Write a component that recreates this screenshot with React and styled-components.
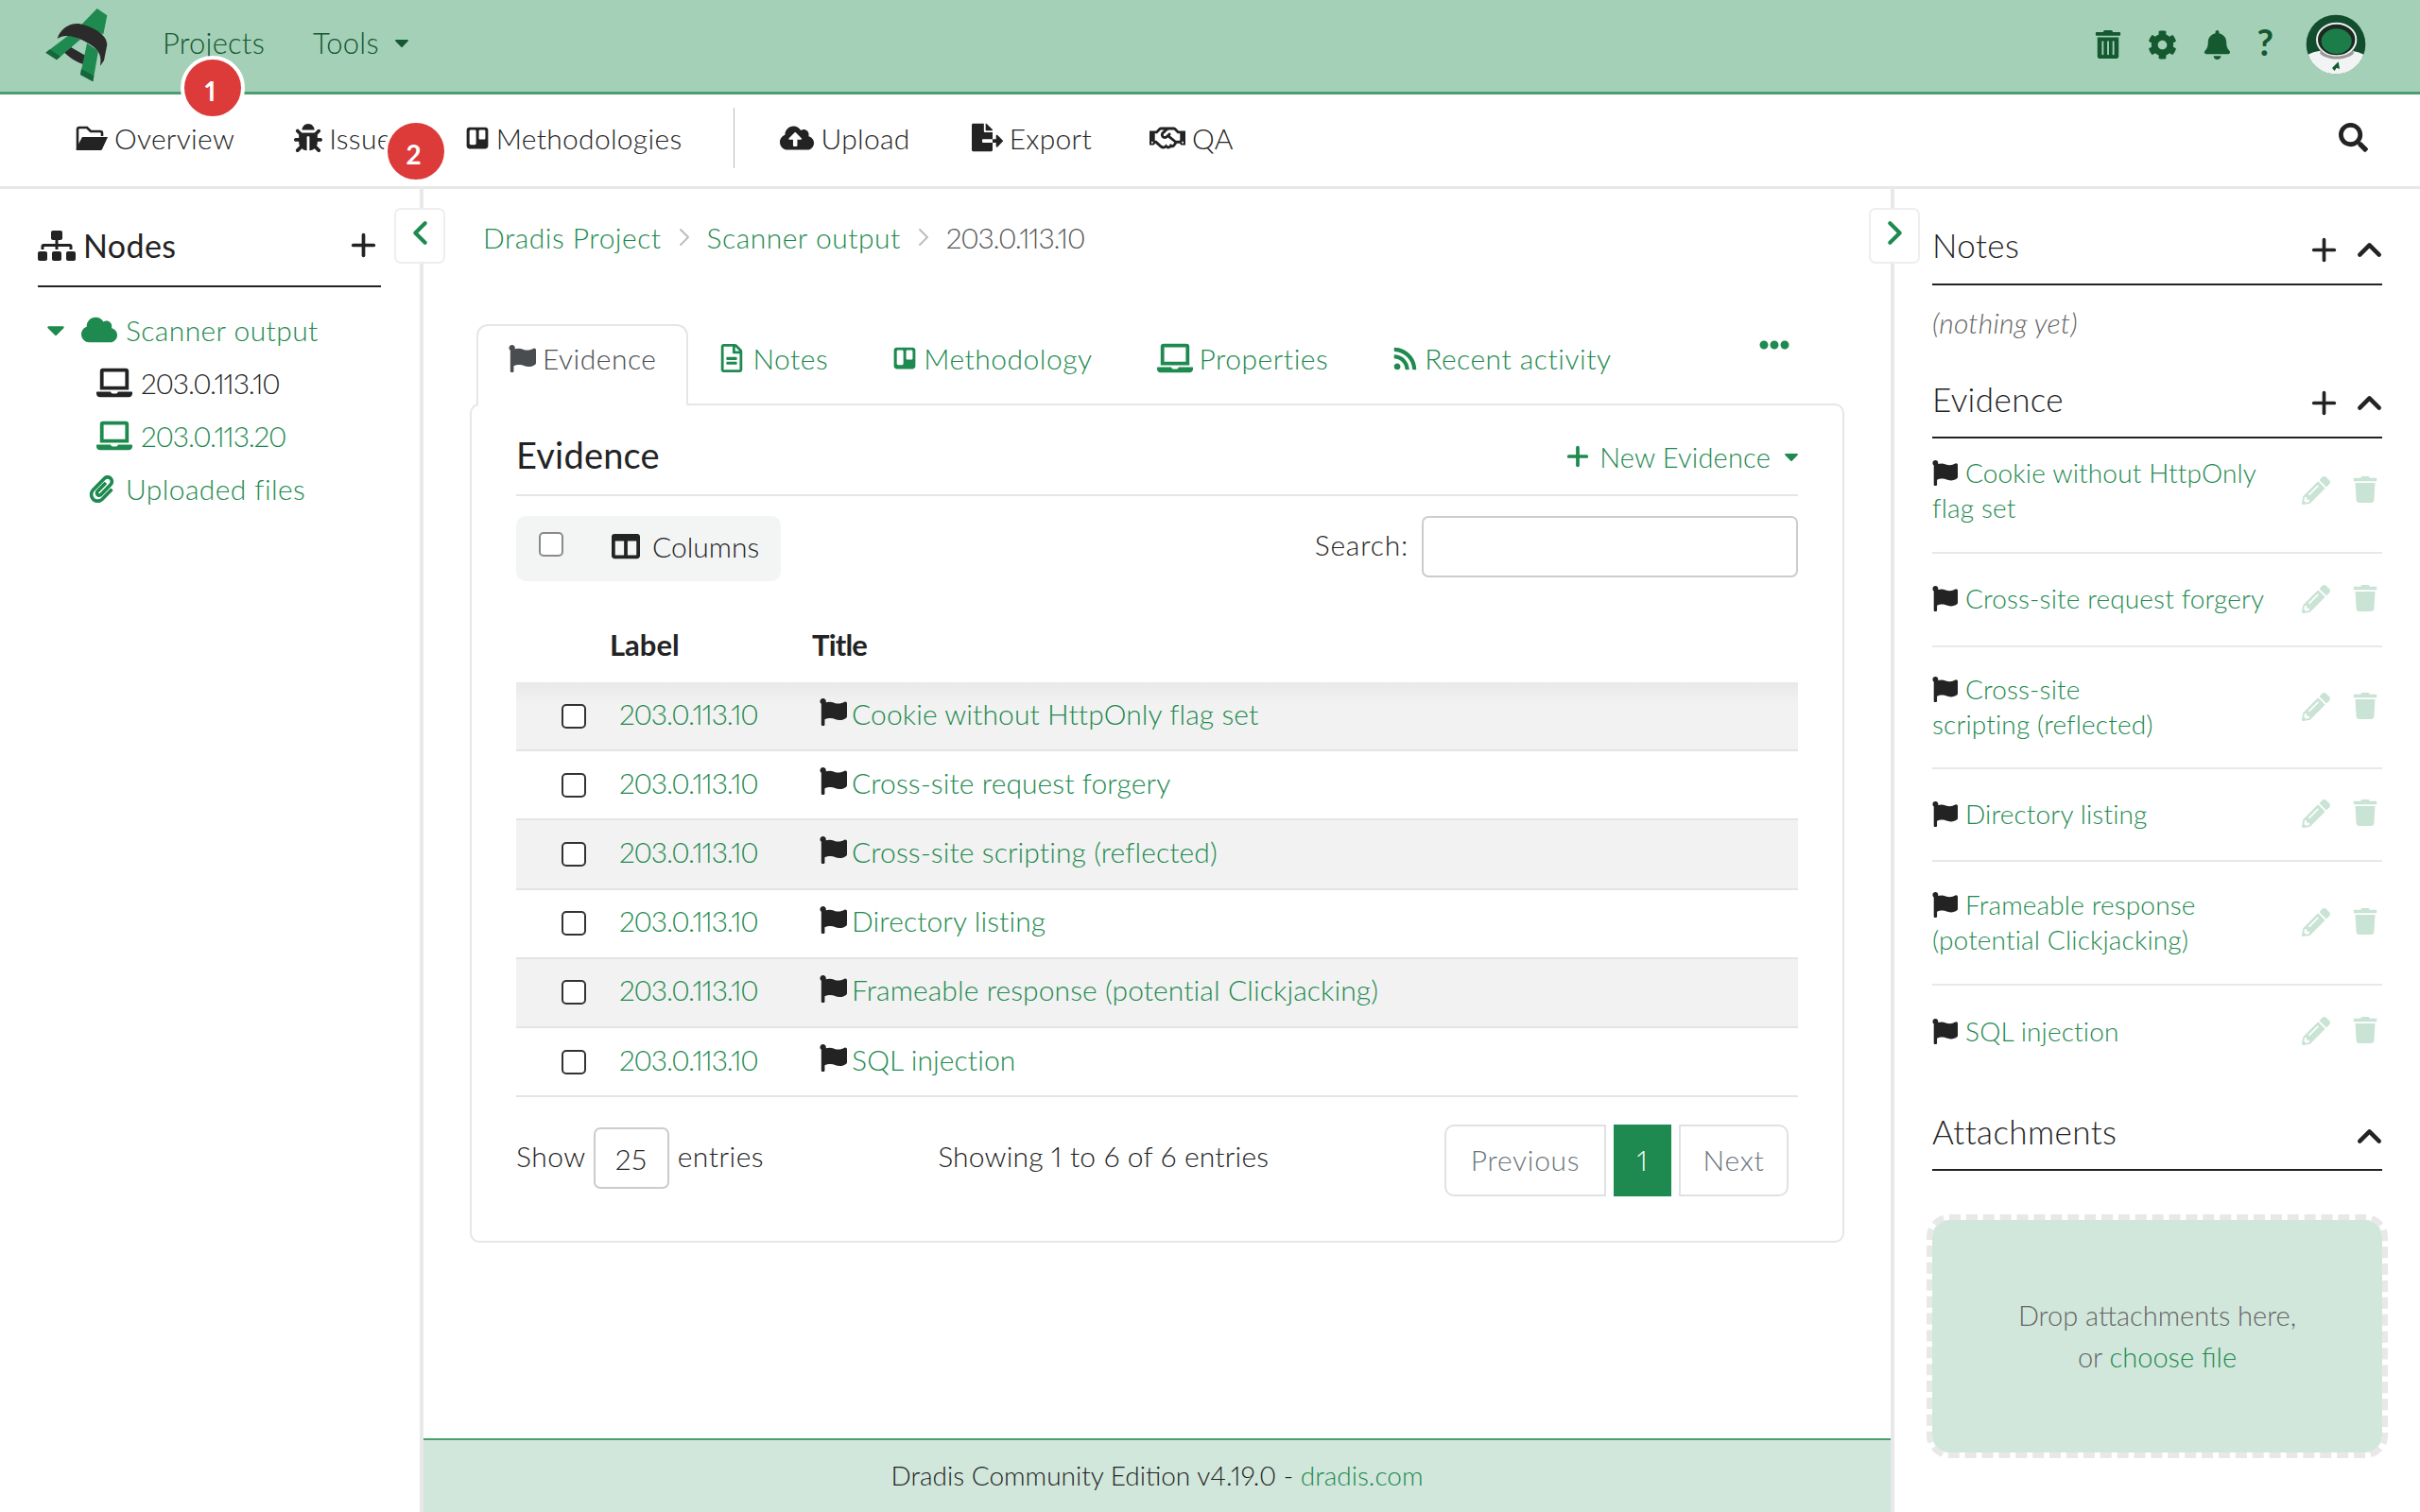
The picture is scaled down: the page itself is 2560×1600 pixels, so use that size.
import React from 'react';
import styled, { createGlobalStyle } from 'styled-components';
import {
  FaBell, FaBug, FaCaretDown, FaCloud, FaCloudUploadAlt, FaCog, FaColumns, FaEllipsisH, FaFileExport, FaFlag,
  FaLaptop, FaPaperclip, FaPencilAlt, FaRegFileAlt, FaRegHandshake, FaRss, FaSearch, FaSitemap, FaTrash,
  FaTrashAlt, FaTrello,
} from 'react-icons/fa';
import { ChevronLeft, ChevronRight, ChevronUp, Plus } from 'lucide-react';

const GREEN = '#1e8a4f';
const DARK = '#232323';

const GlobalStyle = createGlobalStyle`
  html, body {
    margin: 0;
    padding: 0;
    background: #fff;
    color: ${DARK};
    font-family: Lato, "Open Sans", sans-serif;
    font-weight: 300;
    font-size: 30px;
    font-variant-numeric: proportional-nums;
  }
  * { box-sizing: border-box; }
`;

const Page = styled.div`
  position: relative;
  width: 2560px;
  height: 1600px;
  overflow: hidden;
`;

const TopBar = styled.header`
  display: flex;
  align-items: center;
  height: 100px;
  padding: 0 58px 3px 30px;
  background: #a5d0b8;
  border-bottom: 3px solid #4a9f6e;
  color: #14592f;
`;

const LogoBox = styled.svg`
  width: 110px;
  height: 97px;
  margin-right: 32px;
`;

const TopLink = styled.a`
  display: flex;
  align-items: center;
  gap: 12px;
  margin-right: 51px;
  padding-bottom: 4px;
  font-size: 31px;
  letter-spacing: 0.2px;
`;

const TopIcons = styled.div`
  display: flex;
  align-items: center;
  margin-left: auto;
  gap: 27px;
`;

const HelpMark = styled.span`
  margin-top: -6px;
  font-size: 38px;
  font-weight: 700;
  line-height: 1;
`;

const Avatar = styled.svg`
  width: 80px;
  height: 80px;
  margin: 0 -9px 0 -1px;
`;

const Badge = styled.span`
  position: absolute;
  left: ${p => p.$x}px;
  top: ${p => p.$y}px;
  display: flex;
  align-items: center;
  justify-content: center;
  width: 68px;
  height: 68px;
  padding: 6px 5px 0 0;
  border: 4px solid #fff;
  border-radius: 50%;
  background: #dd3a3a;
  color: #fff;
  font-size: 28px;
  font-weight: 700;
`;

const SubNav = styled.nav`
  display: flex;
  align-items: center;
  height: 100px;
  padding: 0 55px 6px 80px;
  border-bottom: 3px solid #e8e8e8;
`;

const SubLink = styled.a`
  display: flex;
  align-items: center;
  gap: 7px;
  margin-right: ${p => p.$gap}px;
  letter-spacing: 0.3px;
  white-space: nowrap;
  svg { flex-shrink: 0; }
`;

const SubDivider = styled.span`
  width: 1px;
  height: 64px;
  margin-right: 48px;
  background: #bbb;
`;

const SearchButton = styled.span`
  display: flex;
  margin-left: auto;
`;

const Layout = styled.div`
  display: grid;
  grid-template-columns: 448px 1552px 560px;
  height: 1400px;
`;

const LeftBar = styled.aside`
  position: relative;
  padding: 0 41px 0 40px;
  border-right: 4px solid #e8e8e8;
`;

const RightBar = styled.aside`
  position: relative;
  padding: 0 40px;
  border-left: 4px solid #e8e8e8;
`;

const ToggleButton = styled.span`
  position: absolute;
  top: 20px;
  ${p => (p.$side === 'left' ? 'right: -27px;' : 'left: -27px;')}
  z-index: 2;
  display: flex;
  align-items: center;
  justify-content: center;
  width: 54px;
  height: 59px;
  padding-bottom: 6px;
  border: 2px solid #eee;
  border-radius: 7px;
  background: #fff;
  color: ${GREEN};
`;

const NodesHead = styled.div`
  display: flex;
  align-items: center;
  height: 104px;
  padding: 17px 0 0 0;
  border-bottom: 2px solid ${DARK};
  font-size: 34px;
  font-weight: 400;
  letter-spacing: 0.4px;
`;

const HeadTitle = styled.span`
  display: flex;
  align-items: center;
  gap: 8px;
  margin-right: auto;
`;

const Tree = styled.ul`
  margin: 17px 0 0;
  padding: 0;
  list-style: none;
  letter-spacing: 0.4px;
`;

const TreeRow = styled.li`
  display: flex;
  align-items: center;
  height: 56px;
  padding-left: ${p => p.$indent}px;
  color: ${p => (p.$active ? DARK : GREEN)};
`;

const TreeIcon = styled.span`
  display: flex;
  justify-content: center;
  width: ${p => p.$w}px;
  margin-right: ${p => p.$mr}px;
`;

const IpText = styled.span`
  letter-spacing: -1.2px;
`;

const Center = styled.main`
  display: flex;
  flex-direction: column;
`;

const Content = styled.div`
  flex: 1;
  padding: 0 49px;
`;

const Breadcrumb = styled.div`
  display: flex;
  align-items: center;
  gap: 8px;
  height: 104px;
  margin-left: 14px;
  padding-bottom: 2px;
  color: ${GREEN};
  letter-spacing: 0.5px;
  span:last-child { color: #555; }
  svg { color: #bbb; }
`;

const TabRow = styled.div`
  display: flex;
  align-items: flex-start;
  height: 86px;
  margin: 39px 0 -2px;
  padding-left: 7px;
  padding-right: 58px;
`;

const Tab = styled.a`
  position: relative;
  z-index: 1;
  display: flex;
  align-items: center;
  gap: 7px;
  height: 86px;
  padding: 0 32px 16px;
  border: 2px solid transparent;
  border-bottom: 0;
  border-radius: 12px 12px 0 0;
  color: ${GREEN};
  letter-spacing: 0.5px;
  ${p => p.$active && `
    border-color: #e4e6e8;
    background: #fff;
    color: #4a4d50;
  `}
`;

const NoteIcon = styled(FaRegFileAlt)`
  margin-left: -3px;
`;

const TabMore = styled.span`
  display: flex;
  margin: 6px 0 0 auto;
  color: ${GREEN};
`;

const Card = styled.section`
  height: 888px;
  padding: 0 47px;
  border: 2px solid #e6e6e6;
  border-radius: 10px;
`;

const CardHead = styled.div`
  display: flex;
  align-items: center;
  justify-content: space-between;
  height: 96px;
  padding-top: 10px;
  border-bottom: 2px solid #e6e6e6;
`;

const CardTitle = styled.h2`
  margin: 0;
  font-size: 38px;
  font-weight: 400;
  letter-spacing: 0.2px;
`;

const NewButton = styled.a`
  display: flex;
  align-items: center;
  gap: 10px;
  margin-right: -5px;
  padding-top: 4px;
  color: ${GREEN};
  font-size: 29px;
  letter-spacing: 0.2px;
  svg:first-child { margin-right: -3px; }
`;

const Toolbar = styled.div`
  display: flex;
  align-items: flex-start;
  justify-content: space-between;
  margin-top: 21px;
`;

const ColumnGroup = styled.div`
  display: flex;
  align-items: center;
  width: 280px;
  height: 69px;
  padding: 0 0 6px 24px;
  border-radius: 10px;
  background: #f3f5f5;
`;

const Check = styled.input.attrs({ type: 'checkbox' })`
  appearance: none;
  flex-shrink: 0;
  width: 26px;
  height: 26px;
  margin: ${p => p.$margin || 0};
  border: 2px solid ${p => (p.$muted ? '#8a8a8a' : '#333')};
  border-radius: 5px;
  background: #fff;
`;

const ColumnsLabel = styled.span`
  display: flex;
  align-items: center;
  gap: 13px;
  margin-left: 51px;
`;

const SearchBox = styled.label`
  display: flex;
  align-items: flex-start;
  gap: 14px;
  line-height: 61px;
  letter-spacing: 0.8px;
`;

const SearchInput = styled.input`
  width: 398px;
  height: 65px;
  border: 2px solid #ccc;
  border-radius: 7px;
`;

const TableHead = styled.div`
  display: grid;
  grid-template-columns: 99px 214px 1fr;
  align-items: center;
  height: 107px;
  padding-top: 26px;
  font-size: 31px;
  font-weight: 700;
  span:last-child { letter-spacing: -0.8px; }
`;

const Row = styled.div`
  display: grid;
  grid-template-columns: 109px 212px 1fr;
  align-items: center;
  height: 73.2px;
  border-bottom: 2px solid #e4e4e4;
  background: ${p => (p.$odd ? '#f2f2f2' : '#fff')};
  ${p => p.$first && 'background: linear-gradient(#e9e9e9, #f2f2f2 24px);'}
  color: ${GREEN};
`;

const LabelCell = styled(IpText)`
  padding-bottom: 6px;
`;

const TitleCell = styled.span`
  display: flex;
  align-items: center;
  gap: 5px;
  padding-bottom: 6px;
  letter-spacing: 0.1px;
  svg { color: ${DARK}; margin-top: -2px; }
`;

const TableFoot = styled.div`
  display: flex;
  align-items: center;
  height: 76px;
  margin-top: 29px;
  padding-right: 10px;
`;

const LengthControl = styled.span`
  display: flex;
  align-items: center;
  margin-bottom: 10px;
  letter-spacing: 0.5px;
`;

const ShowBox = styled.span`
  display: flex;
  align-items: center;
  justify-content: center;
  width: 80px;
  height: 65px;
  margin: 5px 9px 0 8px;
  border: 2px solid #ccc;
  border-radius: 7px;
`;

const Info = styled.span`
  margin: 0 auto 10px 184px;
  letter-spacing: 0.2px;
`;

const Pager = styled.div`
  display: flex;
  gap: 8px;
`;

const PageItem = styled.a`
  display: flex;
  align-items: center;
  justify-content: center;
  width: ${p => p.$w}px;
  height: 76px;
  padding-bottom: 2px;
  border: 2px solid ${p => (p.$current ? GREEN : '#dfe2e5')};
  border-radius: ${p => p.$radius || '0'};
  background: ${p => (p.$current ? GREEN : '#fff')};
  color: ${p => (p.$current ? '#fff' : '#6c757d')};
  letter-spacing: 0.7px;
`;

const Footer = styled.footer`
  display: flex;
  align-items: center;
  justify-content: center;
  height: 78px;
  padding-bottom: 2px;
  border-top: 2px solid #4a9f6e;
  background: #d2e7dc;
  font-size: 28px;
  a { color: ${GREEN}; }
`;

const PanelHead = styled.div`
  display: flex;
  align-items: center;
  height: ${p => p.$h}px;
  margin-top: ${p => p.$mt || 0}px;
  padding-top: ${p => p.$pt || 0}px;
  border-bottom: 2px solid ${DARK};
  font-size: 35px;
  font-weight: 300;
  letter-spacing: 0.4px;
`;

const PanelIcons = styled.span`
  display: flex;
  align-items: center;
  gap: 9px;
  margin: 10px -7px 0 auto;
`;

const Nothing = styled.div`
  margin-top: 21px;
  color: #666;
  font-style: italic;
  letter-spacing: 0.2px;
`;

const EvidenceRow = styled.div`
  display: flex;
  align-items: center;
  justify-content: space-between;
  height: ${p => p.$h}px;
  padding-bottom: ${p => (p.$first ? 10 : 2)}px;
  border-bottom: ${p => (p.$last ? '0' : '2px solid #e8e8e8')};
  color: ${GREEN};
  font-size: 28px;
  letter-spacing: 0.15px;
  line-height: 37px;
`;

const RowText = styled.span`
  svg { color: ${DARK}; margin-right: 8px; vertical-align: -3px; }
`;

const RowActions = styled.span`
  display: flex;
  gap: 23px;
  margin-right: 4px;
  color: #c9e3d5;
`;

const DropZone = styled.div`
  display: flex;
  flex-direction: column;
  align-items: center;
  justify-content: center;
  height: 258px;
  margin: 46px -6px 0;
  border: 6px dashed #e8e8e8;
  border-radius: 24px;
  background: #d2e7dc;
  background-clip: padding-box;
  color: #666;
  font-size: 29px;
  line-height: 44px;
  a { color: ${GREEN}; }
`;

const Logo = () => (
  <LogoBox viewBox="0 0 330 291">
    <path d="M112 168 L130 150 L182 180 L175 207 C150 200 130 185 112 168 Z" fill="#2b2b2b" />
    <path d="M165 85 L218 30 L250 52 L238 112 Z" fill="#1e8a4f" />
    <path d="M55 170 L132 112 L165 128 L90 193 Z" fill="#1e8a4f" />
    <path d="M55 170 L68 160 L102 182 L90 193 Z" fill="#15663a" />
    <path d="M92 126 C100 95 130 76 160 78 C210 88 250 115 250 145 L240 195 L228 212 C236 170 215 152 170 130 C140 114 110 112 92 126 Z" fill="#2b2b2b" />
    <path d="M186 140 L222 165 L205 262 L165 240 Z" fill="#1e8a4f" />
    <path d="M168 222 L208 244 L205 262 L165 240 Z" fill="#15663a" />
  </LogoBox>
);

const AvatarImage = () => (
  <Avatar viewBox="0 0 240 240">
    <circle cx="120" cy="120" r="94" fill="#124d2d" />
    <path d="M32 152 C70 130 170 130 208 152 C195 190 160 214 120 214 C80 214 45 190 32 152 Z" fill="#f1f4f2" />
    <ellipse cx="122" cy="105" rx="62" ry="52" fill="#1b2b22" stroke="#eee" strokeWidth="6" />
    <path d="M70 135 C90 165 155 165 176 135 L176 150 C150 172 95 172 70 150 Z" fill="#999" />
    <ellipse cx="122" cy="110" rx="48" ry="40" fill="#1c7d48" />
    <path d="M108 195 L128 175 L132 198 L122 194 L116 204 Z" fill="#14592f" />
  </Avatar>
);

const FolderIcon = () => (
  <svg width="34" height="30" viewBox="0 0 34 30">
    <path d="M2 25 V6 a2 2 0 0 1 2-2 h8 l4 4 h10 a2 2 0 0 1 2 2 v3" fill="none" stroke="currentColor" strokeWidth="2.6" />
    <path d="M7 14 H34 L28 27 a1.5 1.5 0 0 1-1.5 1 H2 a1.5 1.5 0 0 1-1.5-2 Z" fill="currentColor" />
  </svg>
);

const PlusIcon = () => <Plus size={37} strokeWidth={2.4} />;
const UpIcon = () => <ChevronUp size={41} strokeWidth={2.6} />;

const evidenceRows = [
  'Cookie without HttpOnly flag set',
  'Cross-site request forgery',
  'Cross-site scripting (reflected)',
  'Directory listing',
  'Frameable response (potential Clickjacking)',
  'SQL injection',
];

const sideRows = [
  { h: 122, lines: ['Cookie without HttpOnly', 'flag set'] },
  { h: 99, lines: ['Cross-site request forgery'] },
  { h: 129, lines: ['Cross-site', 'scripting (reflected)'] },
  { h: 98, lines: ['Directory listing'] },
  { h: 131, lines: ['Frameable response', '(potential Clickjacking)'] },
  { h: 98, lines: ['SQL injection'] },
];

const App = () => (
  <Page>
    <GlobalStyle />
    <TopBar>
      <Logo />
      <TopLink>Projects</TopLink>
      <TopLink>Tools <FaCaretDown size={24} /></TopLink>
      <TopIcons>
        <FaTrashAlt size={30} />
        <FaCog size={31} />
        <FaBell size={31} />
        <HelpMark>?</HelpMark>
        <AvatarImage />
      </TopIcons>
    </TopBar>
    <SubNav>
      <SubLink $gap={63}><FolderIcon />Overview</SubLink>
      <SubLink $gap={64}><FaBug size={30} />Issues</SubLink>
      <SubLink $gap={55}><FaTrello size={26} />Methodologies</SubLink>
      <SubDivider />
      <SubLink $gap={65}><FaCloudUploadAlt size={36} />Upload</SubLink>
      <SubLink $gap={61}><FaFileExport size={33} />Export</SubLink>
      <SubLink $gap={0}><FaRegHandshake size={38} />QA</SubLink>
      <SearchButton><FaSearch size={31} /></SearchButton>
    </SubNav>
    <Layout>
      <LeftBar>
        <ToggleButton $side="left"><ChevronLeft size={41} strokeWidth={2.4} /></ToggleButton>
        <NodesHead>
          <HeadTitle><FaSitemap size={40} />Nodes</HeadTitle>
          <PlusIcon />
        </NodesHead>
        <Tree>
          <TreeRow $indent={9}>
            <TreeIcon $w={20} $mr={17}><FaCaretDown size={30} /></TreeIcon>
            <TreeIcon $w={38} $mr={9}><FaCloud size={38} /></TreeIcon>
            Scanner output
          </TreeRow>
          <TreeRow $indent={62} $active>
            <TreeIcon $w={38} $mr={9}><FaLaptop size={38} /></TreeIcon>
            <IpText>203.0.113.10</IpText>
          </TreeRow>
          <TreeRow $indent={62}>
            <TreeIcon $w={38} $mr={9}><FaLaptop size={38} /></TreeIcon>
            <IpText>203.0.113.20</IpText>
          </TreeRow>
          <TreeRow $indent={52}>
            <TreeIcon $w={30} $mr={11}><FaPaperclip size={29} /></TreeIcon>
            Uploaded files
          </TreeRow>
        </Tree>
      </LeftBar>
      <Center>
        <Content>
          <Breadcrumb>
            <span>Dradis Project</span>
            <ChevronRight size={32} strokeWidth={1.4} />
            <span>Scanner output</span>
            <ChevronRight size={32} strokeWidth={1.4} />
            <IpText>203.0.113.10</IpText>
          </Breadcrumb>
          <TabRow>
            <Tab $active><FaFlag size={29} />Evidence</Tab>
            <Tab><NoteIcon size={30} />Notes</Tab>
            <Tab><FaTrello size={26} />Methodology</Tab>
            <Tab><FaLaptop size={38} />Properties</Tab>
            <Tab><FaRss size={27} />Recent activity</Tab>
            <TabMore><FaEllipsisH size={32} /></TabMore>
          </TabRow>
          <Card>
            <CardHead>
              <CardTitle>Evidence</CardTitle>
              <NewButton><Plus size={32} strokeWidth={2.8} />New Evidence<FaCaretDown size={24} /></NewButton>
            </CardHead>
            <Toolbar>
              <ColumnGroup>
                <Check $muted $margin="0 0 4px" />
                <ColumnsLabel><FaColumns size={30} />Columns</ColumnsLabel>
              </ColumnGroup>
              <SearchBox>Search:<SearchInput /></SearchBox>
            </Toolbar>
            <TableHead>
              <span />
              <span>Label</span>
              <span>Title</span>
            </TableHead>
            {evidenceRows.map((title, i) => (
              <Row key={title} $odd={i % 2 === 0} $first={i === 0}>
                <Check $margin="0 0 0 48px" />
                <LabelCell>203.0.113.10</LabelCell>
                <TitleCell><FaFlag size={29} />{title}</TitleCell>
              </Row>
            ))}
            <TableFoot>
              <LengthControl>Show <ShowBox>25</ShowBox> entries</LengthControl>
              <Info>Showing 1 to 6 of 6 entries</Info>
              <Pager>
                <PageItem $w={171} $radius="10px 0 0 10px">Previous</PageItem>
                <PageItem $w={61} $current>1</PageItem>
                <PageItem $w={116} $radius="0 10px 10px 0">Next</PageItem>
              </Pager>
            </TableFoot>
          </Card>
        </Content>
        <Footer>
          <span>Dradis Community Edition v4.19.0 - <a>dradis.com</a></span>
        </Footer>
      </Center>
      <RightBar>
        <ToggleButton $side="right"><ChevronRight size={41} strokeWidth={2.4} /></ToggleButton>
        <PanelHead $h={102} $pt={18}>
          Notes
          <PanelIcons><PlusIcon /><UpIcon /></PanelIcons>
        </PanelHead>
        <Nothing>(nothing yet)</Nothing>
        <PanelHead $h={87} $mt={18} $pt={4}>
          Evidence
          <PanelIcons><PlusIcon /><UpIcon /></PanelIcons>
        </PanelHead>
        {sideRows.map((row, i) => (
          <EvidenceRow key={row.lines[0]} $h={row.h} $first={i === 0} $last={i === sideRows.length - 1}>
            <RowText>
              <FaFlag size={27} />
              {row.lines.map((line, n) => (
                <React.Fragment key={line}>
                  {n > 0 && <br />}
                  {line}
                </React.Fragment>
              ))}
            </RowText>
            <RowActions>
              <FaPencilAlt size={30} />
              <FaTrash size={28} />
            </RowActions>
          </EvidenceRow>
        ))}
        <PanelHead $h={92} $mt={6} $pt={10}>
          Attachments
          <PanelIcons><UpIcon /></PanelIcons>
        </PanelHead>
        <DropZone>
          <span>Drop attachments here,</span>
          <span>or <a>choose file</a></span>
        </DropZone>
      </RightBar>
    </Layout>
    <Badge $x={191} $y={59}>1</Badge>
    <Badge $x={406} $y={126}>2</Badge>
  </Page>
);

export default App;
